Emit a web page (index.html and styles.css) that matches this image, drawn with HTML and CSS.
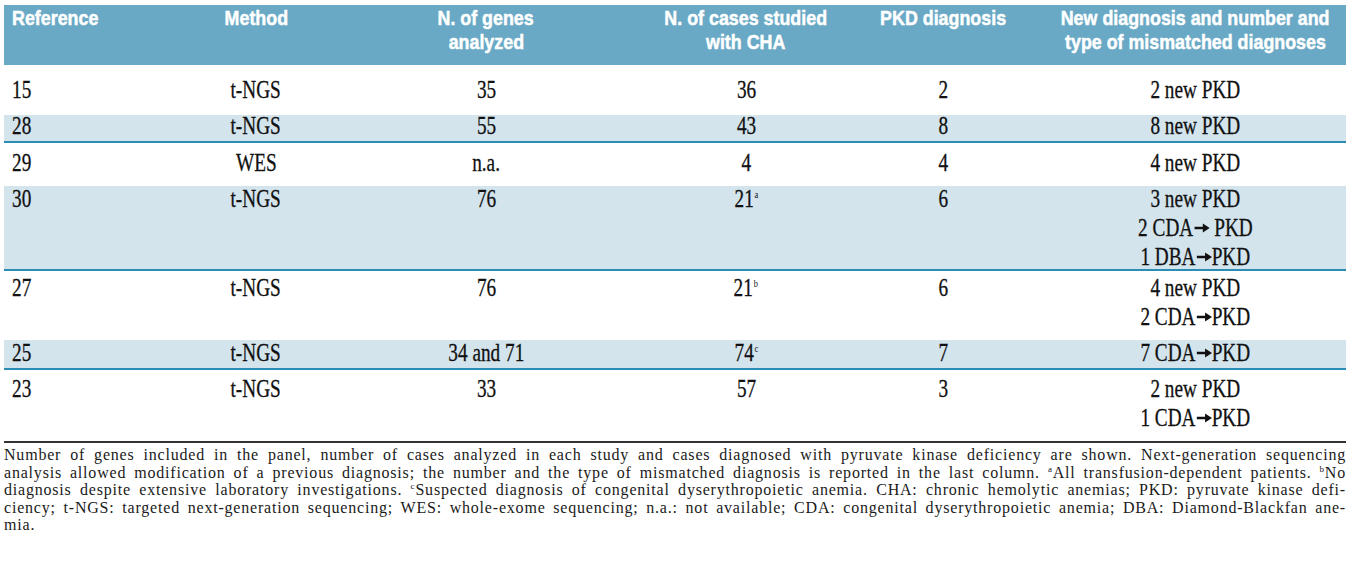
FILE: index.html
```html
<!DOCTYPE html>
<html lang="en">
<head>
<meta charset="utf-8">
<title>Table</title>
<link rel="stylesheet" href="styles.css">
</head>
<body>
<div class="page">
  <div class="tbl">
    <div class="row head">
      <div class="c l"><span class="t">Reference</span></div>
      <div class="c"><span class="t">Method</span></div>
      <div class="c"><span class="t">N. of genes</span><span class="t">analyzed</span></div>
      <div class="c"><span class="t">N. of cases studied</span><span class="t">with CHA</span></div>
      <div class="c"><span class="t">PKD diagnosis</span></div>
      <div class="c"><span class="t">New diagnosis and number and</span><span class="t">type of mismatched diagnoses</span></div>
    </div>

    <div class="row r15">
      <div class="c l"><span class="t">15</span></div>
      <div class="c"><span class="t">t-NGS</span></div>
      <div class="c"><span class="t">35</span></div>
      <div class="c"><span class="t">36</span></div>
      <div class="c"><span class="t">2</span></div>
      <div class="c"><span class="t">2 new PKD</span></div>
    </div>

    <div class="row band r28">
      <div class="c l"><span class="t">28</span></div>
      <div class="c"><span class="t">t-NGS</span></div>
      <div class="c"><span class="t">55</span></div>
      <div class="c"><span class="t">43</span></div>
      <div class="c"><span class="t">8</span></div>
      <div class="c"><span class="t">8 new PKD</span></div>
    </div>

    <div class="row r29">
      <div class="c l"><span class="t">29</span></div>
      <div class="c"><span class="t">WES</span></div>
      <div class="c"><span class="t">n.a.</span></div>
      <div class="c"><span class="t">4</span></div>
      <div class="c"><span class="t">4</span></div>
      <div class="c"><span class="t">4 new PKD</span></div>
    </div>

    <div class="row band r30">
      <div class="c l"><span class="t">30</span></div>
      <div class="c"><span class="t">t-NGS</span></div>
      <div class="c"><span class="t">76</span></div>
      <div class="c"><span class="t">21<sup class="sup">a</sup></span></div>
      <div class="c"><span class="t">6</span></div>
      <div class="c">
        <span class="t">3 new PKD</span>
        <span class="t">2 CDA<svg class="arrow" viewBox="0 0 20 12" width="20" height="12"><line x1="0" y1="6" x2="13" y2="6" stroke="#111" stroke-width="2.4"/><polygon points="11,1.5 20,6 11,10.5" fill="#111"/></svg> PKD</span>
        <span class="t">1 DBA<svg class="arrow" viewBox="0 0 20 12" width="20" height="12"><line x1="0" y1="6" x2="13" y2="6" stroke="#111" stroke-width="2.4"/><polygon points="11,1.5 20,6 11,10.5" fill="#111"/></svg>PKD</span>
      </div>
    </div>

    <div class="row r27">
      <div class="c l"><span class="t">27</span></div>
      <div class="c"><span class="t">t-NGS</span></div>
      <div class="c"><span class="t">76</span></div>
      <div class="c"><span class="t">21<sup class="sup">b</sup></span></div>
      <div class="c"><span class="t">6</span></div>
      <div class="c">
        <span class="t">4 new PKD</span>
        <span class="t">2 CDA<svg class="arrow" viewBox="0 0 20 12" width="20" height="12"><line x1="0" y1="6" x2="13" y2="6" stroke="#111" stroke-width="2.4"/><polygon points="11,1.5 20,6 11,10.5" fill="#111"/></svg>PKD</span>
      </div>
    </div>

    <div class="row band r25">
      <div class="c l"><span class="t">25</span></div>
      <div class="c"><span class="t">t-NGS</span></div>
      <div class="c"><span class="t">34 and 71</span></div>
      <div class="c"><span class="t">74<sup class="sup">c</sup></span></div>
      <div class="c"><span class="t">7</span></div>
      <div class="c"><span class="t">7 CDA<svg class="arrow" viewBox="0 0 20 12" width="20" height="12"><line x1="0" y1="6" x2="13" y2="6" stroke="#111" stroke-width="2.4"/><polygon points="11,1.5 20,6 11,10.5" fill="#111"/></svg>PKD</span></div>
    </div>

    <div class="row r23">
      <div class="c l"><span class="t">23</span></div>
      <div class="c"><span class="t">t-NGS</span></div>
      <div class="c"><span class="t">33</span></div>
      <div class="c"><span class="t">57</span></div>
      <div class="c"><span class="t">3</span></div>
      <div class="c">
        <span class="t">2 new PKD</span>
        <span class="t">1 CDA<svg class="arrow" viewBox="0 0 20 12" width="20" height="12"><line x1="0" y1="6" x2="13" y2="6" stroke="#111" stroke-width="2.4"/><polygon points="11,1.5 20,6 11,10.5" fill="#111"/></svg>PKD</span>
      </div>
    </div>
  </div>

  <div class="notes">
    <span class="ln">Number of genes included in the panel, number of cases analyzed in each study and cases diagnosed with pyruvate kinase deficiency are shown. Next-generation sequencing</span>
    <span class="ln">analysis allowed modification of a previous diagnosis; the number and the type of mismatched diagnosis is reported in the last column. <sup class="nsup">a</sup>All transfusion-dependent patients. <sup class="nsup">b</sup>No</span>
    <span class="ln">diagnosis despite extensive laboratory investigations. <sup class="nsup">c</sup>Suspected diagnosis of congenital dyserythropoietic anemia. CHA: chronic hemolytic anemias; PKD: pyruvate kinase defi-</span>
    <span class="ln">ciency; t-NGS: targeted next-generation sequencing; WES: whole-exome sequencing; n.a.: not available; CDA: congenital dyserythropoietic anemia; DBA: Diamond-Blackfan ane-</span>
    <span class="ln last">mia.</span>
  </div>
</div>
</body>
</html>
```

FILE: styles.css
```css
html, body {
  margin: 0;
  padding: 0;
  background: #ffffff;
}

.page {
  padding: 5px 6px 0 4px;
  width: 1342px;
  overflow: hidden;
}

.tbl {
  font-family: "Liberation Serif", "Times New Roman", serif;
  font-size: 25px;
  color: #111111;
  -webkit-text-stroke: 0.3px #111111;
}

.row {
  display: grid;
  grid-template-columns: 186px 132px 328px 192px 202px 302px;
  box-sizing: border-box;
}

.c {
  display: flex;
  flex-direction: column;
  align-items: center;
  gap: 7px;
  min-width: 0;
}

.c.l {
  align-items: flex-start;
  padding-left: 8px;
}

.t {
  display: block;
  white-space: nowrap;
  line-height: 22px;
  transform: scaleX(0.77);
  transform-origin: center center;
}

.c.l .t {
  transform-origin: left center;
}

.head {
  background: #69a9c5;
  height: 60px;
  padding-top: 1px;
  color: #ffffff;
  font-family: "Liberation Sans", Arial, sans-serif;
  font-weight: bold;
  font-size: 21px;
  -webkit-text-stroke: 0.5px #ffffff;
}

.head .c {
  gap: 0;
}

.head .t {
  line-height: 23.5px;
  transform: scaleX(0.85);
}

.band {
  background: #d3e4ed;
  border-bottom: 2px solid #2b8db6;
}

.r15 { height: 50px; padding-top: 14px; }
.r28 { height: 28px; padding-top: 0; }
.r29 { height: 43px; padding-top: 9px; }
.r30 { height: 85px; padding-top: 2px; }
.r27 { height: 69px; padding-top: 6px; }
.r25 { height: 30px; padding-top: 2px; }
.r23 { height: 71px; padding-top: 8px; }

.sup {
  font-size: 11px;
  line-height: 0;
  vertical-align: 9px;
  margin-left: 1px;
  -webkit-text-stroke: 0;
}

.arrow {
  display: inline-block;
  width: 20px;
  height: 12px;
  vertical-align: 2px;
  margin-left: 1px;
}

.notes {
  border-top: 2px solid #333333;
  padding-top: 3px;
  font-family: "Liberation Serif", "Times New Roman", serif;
  font-size: 16px;
  letter-spacing: 0.8px;
  line-height: 17.6px;
  color: #1a1a1a;
}

.ln {
  display: block;
  text-align: justify;
  text-align-last: justify;
  white-space: nowrap;
}

.ln.last {
  text-align-last: left;
}

.nsup {
  font-size: 9px;
  line-height: 0;
  vertical-align: 6px;
}
```
